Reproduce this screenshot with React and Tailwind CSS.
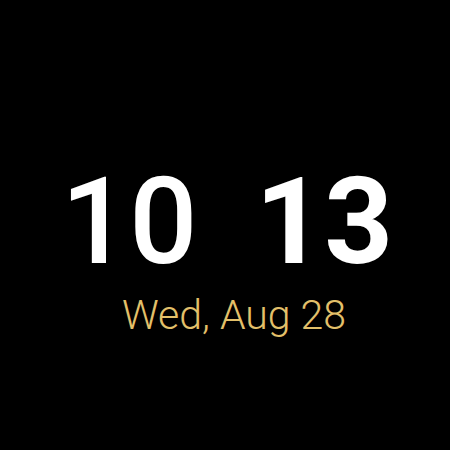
export default function App() {
  return (
    <div className="w-[450px] h-[450px] bg-black flex flex-col items-center pt-[152px]" style={{ fontFamily: 'Roboto, "Liberation Sans", sans-serif' }}>
      <div className="flex items-baseline gap-[58px] text-white text-[120px] leading-[140px] ml-[4px]">
        <span className="font-medium">10</span>
        <span className="font-bold">13</span>
      </div>
      <div className="text-[#e3c06a] text-[41px] font-light leading-[48px] -mt-[1px] ml-[18px]">Wed, Aug 28</div>
    </div>
  );
}
